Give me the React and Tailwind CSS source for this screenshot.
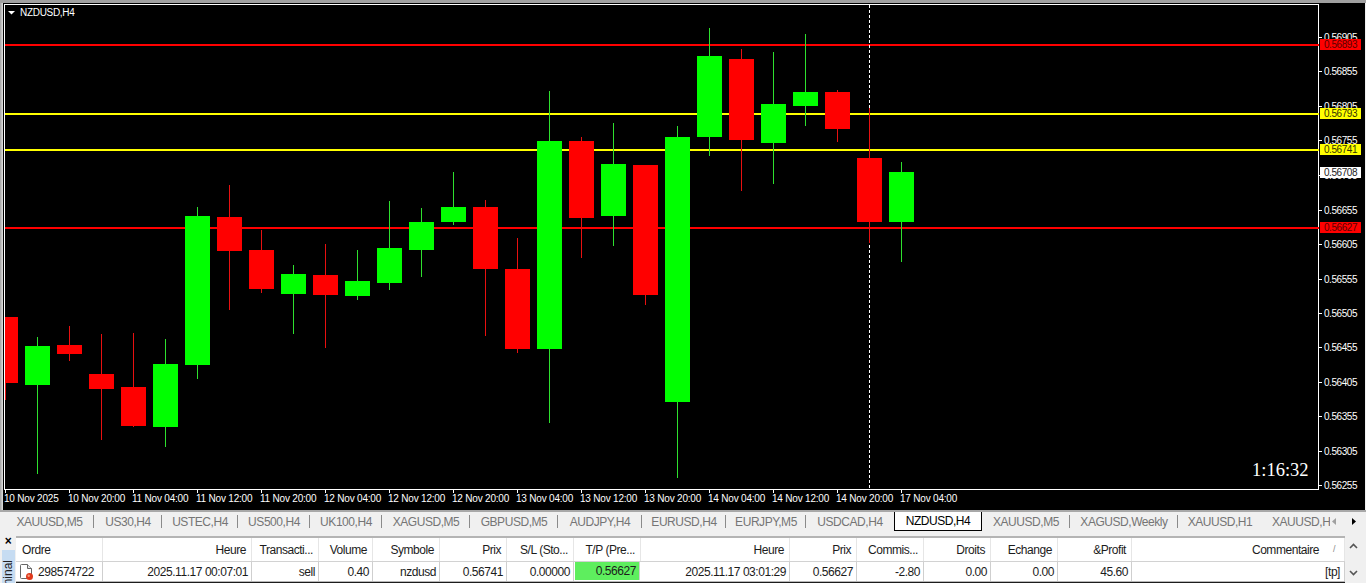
import React from 'react';

// x, body top, body bottom, wick top, wick bottom, up
const candles = [
  [5, 317, 383, 317, 400, false],
  [37, 346, 385, 337, 474, true],
  [69, 345, 354, 326, 361, false],
  [101, 374, 389, 334, 440, false],
  [133, 387, 426, 333, 427, false],
  [165, 364, 427, 339, 447, true],
  [197, 216, 365, 207, 379, true],
  [229, 217, 251, 185, 310, false],
  [261, 250, 289, 230, 293, false],
  [293, 274, 294, 265, 334, true],
  [325, 275, 295, 244, 348, false],
  [357, 281, 296, 250, 300, true],
  [389, 248, 283, 201, 290, true],
  [421, 222, 250, 208, 277, true],
  [453, 207, 222, 172, 225, true],
  [485, 207, 269, 200, 336, false],
  [517, 269, 349, 238, 353, false],
  [549, 141, 349, 91, 423, true],
  [581, 141, 218, 137, 258, false],
  [613, 164, 216, 123, 246, true],
  [645, 165, 295, 165, 305, false],
  [677, 137, 402, 126, 478, true],
  [709, 56, 137, 28, 156, true],
  [741, 59, 140, 49, 191, false],
  [773, 104, 143, 52, 184, true],
  [805, 92, 106, 34, 126, true],
  [837, 92, 129, 90, 142, false],
  [869, 158, 222, 108, 243, false],
  [901, 172, 222, 162, 262, true],
];

const prices = [
  ['0.56905', 37], ['0.56855', 71], ['0.56805', 106], ['0.56755', 140],
  ['0.56705', 175], ['0.56655', 210], ['0.56605', 244], ['0.56555', 279],
  ['0.56505', 313], ['0.56455', 347], ['0.56405', 382], ['0.56355', 416],
  ['0.56305', 451], ['0.56255', 485],
];

const times = [
  '10 Nov 2025', '10 Nov 20:00', '11 Nov 04:00', '11 Nov 12:00', '11 Nov 20:00',
  '12 Nov 04:00', '12 Nov 12:00', '12 Nov 20:00', '13 Nov 04:00', '13 Nov 12:00',
  '13 Nov 20:00', '14 Nov 04:00', '14 Nov 12:00', '14 Nov 20:00', '17 Nov 04:00',
];

const levels = [
  { y: 45, color: '#ff0000', label: '0.56893' },
  { y: 114, color: '#ffff00', label: '0.56793' },
  { y: 150, color: '#ffff00', label: '0.56741' },
  { y: 228, color: '#ff0000', label: '0.56627' },
];

const tabs = [
  { name: 'XAUUSD,M5', width: 'w-[89px]' },
  { name: 'US30,H4', width: 'w-[68px]' },
  { name: 'USTEC,H4', width: 'w-[76px]' },
  { name: 'US500,H4', width: 'w-[72px]' },
  { name: 'UK100,H4', width: 'w-[72px]' },
  { name: 'XAGUSD,M5', width: 'w-[88px]' },
  { name: 'GBPUSD,M5', width: 'w-[88px]' },
  { name: 'AUDJPY,H4', width: 'w-[84px]' },
  { name: 'EURUSD,H4', width: 'w-[84px]' },
  { name: 'EURJPY,M5', width: 'w-[80px]' },
  { name: 'USDCAD,H4', width: 'w-[88px]' },
  { name: 'NZDUSD,H4', width: 'w-[88px]', active: true },
  { name: 'XAUUSD,M5', width: 'w-[88px]' },
  { name: 'XAGUSD,Weekly', width: 'w-[108px]' },
  { name: 'XAUUSD,H1', width: 'w-[84px]' },
];

const columns =
  'grid-cols-[87px_149px_67px_54px_67px_67px_67px_67px_149px_67px_67px_67px_67px_74px_213px]';

const headers = [
  'Ordre', 'Heure', 'Transacti...', 'Volume', 'Symbole', 'Prix', 'S/L (Sto...', 'T/P (Pre...',
  'Heure', 'Prix', 'Commis...', 'Droits', 'Echange', '&Profit', 'Commentaire',
];

const values = [
  '298574722', '2025.11.17 00:07:01', 'sell', '0.40', 'nzdusd', '0.56741', '0.00000', '0.56627',
  '2025.11.17 03:01:29', '0.56627', '-2.80', '0.00', '0.00', '45.60', '[tp]',
];

const Chart = () => (
  <svg
    className="block w-[1362px] h-[507px] font-['Liberation_Sans',sans-serif]"
    viewBox="3 3 1362 507"
    shapeRendering="crispEdges"
  >
    <rect x="3" y="3" width="1362" height="507" fill="#000" />
    <path d="M4.5 4.5H1318.5V489.5H4.5Z" fill="none" stroke="#fff" />

    {levels.map((l) => (
      <rect key={l.y} x="5" y={l.y - 1} width="1314" height="2" fill={l.color} />
    ))}

    <line x1="869.5" y1="5" x2="869.5" y2="489" stroke="#fff" strokeDasharray="3 2" />

    {candles.map(([x, top, bottom, wickTop, wickBottom, up]) => (
      <g key={x}>
        <rect x={x} y={wickTop} width="1" height={wickBottom - wickTop} fill={up ? '#2ee02e' : '#e81010'} />
        <rect
          x={Math.max(x - 12, 5)}
          y={top}
          width={x - 12 < 5 ? x + 13 - 5 : 25}
          height={bottom - top}
          fill={up ? '#00ff00' : '#ff0000'}
        />
      </g>
    ))}

    <path d="M8 11H15L11.5 14.5Z" fill="#fff" shapeRendering="auto" />
    <text x="20" y="16" fill="#fff" className="text-[10px] tracking-[-0.3px]">NZDUSD,H4</text>

    {prices.map(([label, y]) => (
      <g key={label}>
        <rect x="1319" y={y} width="3" height="1" fill="#fff" />
        <text x="1324" y={y + 4} fill="#fff" className="text-[10px] tracking-[-0.45px]">{label}</text>
      </g>
    ))}

    {levels.map((l) => (
      <g key={l.label}>
        <rect x="1320" y={l.y - 6} width="41" height="11" fill={l.color} />
        <text x="1324" y={l.y + 3} fill={l.color === '#ff0000' ? '#5a0000' : '#333300'} className="text-[10px] tracking-[-0.45px]">
          {l.label}
        </text>
      </g>
    ))}
    <rect x="1320" y="167" width="41" height="11" fill="#fff" />
    <text x="1324" y="176" fill="#222" className="text-[10px] tracking-[-0.45px]">0.56708</text>

    {times.map((label, i) => (
      <g key={label}>
        <rect x={5 + i * 64} y="490" width="1" height="3" fill="#fff" />
        <text x={4 + i * 64} y="502" fill="#fff" className="text-[10px] tracking-[-0.2px]">{label}</text>
      </g>
    ))}

    <text x="1252" y="476" fill="#fff" className="font-['Liberation_Serif',serif] text-[18.5px]">1:16:32</text>
  </svg>
);

const TabBar = () => (
  <div className="flex h-[23px] items-start border-t-2 border-[#a8a8a8] bg-[#f0f0f0] pl-[5px] text-[12px] tracking-[-0.45px]">
    {tabs.map((tab, i) => (
      <div
        key={i}
        className={
          tab.active
            ? `${tab.width} flex h-[19px] shrink-0 items-center justify-center border-x border-b border-black bg-white text-black`
            : `${tab.width} flex h-[19px] shrink-0 items-center justify-center text-[#757575] ${
                tabs[i + 1] && !tabs[i + 1].active ? 'relative after:absolute after:right-0 after:top-[3px] after:h-[13px] after:w-px after:bg-[#8a8a8a]' : ''
              }`
        }
      >
        {tab.name}
      </div>
    ))}
    <div className="flex h-[19px] w-[68px] shrink-0 items-center overflow-hidden whitespace-nowrap pl-[10px] text-[#757575]">XAUUSD,H</div>
    <div className="flex h-[19px] items-center gap-[16px] pl-[2px]">
      <svg width="4" height="7" viewBox="0 0 4 7"><path d="M4 0V7L0 3.5Z" fill="#a0a0a0" /></svg>
      <svg width="4" height="7" viewBox="0 0 4 7"><path d="M0 0V7L4 3.5Z" fill="#000" /></svg>
    </div>
  </div>
);

const OrderIcon = () => (
  <svg width="16" height="18" viewBox="0 0 16 18" className="shrink-0">
    <path d="M1.5 2.5Q1.5 1.5 2.5 1.5H8.5L12.5 5.5V15.5H2.5Q1.5 15.5 1.5 14.5Z" fill="#fff" stroke="#666" />
    <path d="M8.5 1.5V5.5H12.5" fill="#e8e8e8" stroke="#666" />
    <circle cx="10.5" cy="13.5" r="3.5" fill="#e0391c" />
    <circle cx="9.7" cy="12.7" r="1.2" fill="#f59a7c" />
  </svg>
);

const Terminal = () => (
  <div className="flex h-[50px] bg-[#f0f0f0] font-['Liberation_Sans',sans-serif] text-[12px] tracking-[-0.45px] text-[#1c1c1c]">
    <div className="flex w-[16px] shrink-0 flex-col items-center">
      <div className="mt-[1px] h-[14px] text-[12px] font-bold leading-[14px] text-black">×</div>
      <div className="mt-[2px] flex h-[33px] w-[13px] justify-center overflow-hidden bg-[#c6dcf2]">
        <span className="h-max rotate-180 whitespace-nowrap pb-[10px] text-[12px] leading-[13px] tracking-normal text-[#222] [writing-mode:vertical-rl]">
          Terminal
        </span>
      </div>
    </div>

    <div className="mt-[3px] w-[1329px] shrink-0">
      <div className={`grid h-[26px] ${columns} border-t-2 border-b border-t-[#b4b4b4] border-b-[#d2d2d2] bg-white`}>
        {headers.map((h, i) => (
          <div
            key={i}
            className={`flex items-center border-r border-[#e6e6e6] ${
              i === 0 ? 'pl-[6px]' : i === 14 ? 'justify-end pr-[25px]' : 'justify-end pr-[5px]'
            } ${i === 14 ? 'relative' : ''}`}
          >
            {h}
            {i === 14 && <span className="absolute right-[9px] text-[9px] text-[#888]">/</span>}
          </div>
        ))}
      </div>
      <div className={`grid h-[20px] ${columns} border-b border-[#b8b8b8] bg-white`}>
        {values.map((v, i) =>
          i === 0 ? (
            <div key={i} className="flex items-center gap-[3px] border-r border-[#cfcfcf] pl-[3px]">
              <OrderIcon />
              {v}
            </div>
          ) : (
            <div
              key={i}
              className={`flex items-center justify-end border-r border-[#cfcfcf] pr-[3px] ${
                i === 7 ? 'mx-[1px] mb-[1px] bg-[#5eee5e]' : ''
              } ${i === 14 ? 'pr-[4px]' : ''}`}
            >
              {v}
            </div>
          )
        )}
      </div>
      <div className="h-px bg-[#1c1c1c]" />
    </div>

    <div className="flex flex-1 flex-col items-center gap-[21px] pr-[5px] pt-[10px]">
      <svg width="9" height="6" viewBox="0 0 9 6"><path d="M1 5L4.5 1.5L8 5" fill="none" stroke="#555" strokeWidth="1.6" /></svg>
      <svg width="9" height="6" viewBox="0 0 9 6"><path d="M1 1L4.5 4.5L8 1" fill="none" stroke="#555" strokeWidth="1.6" /></svg>
    </div>
  </div>
);

export default function App() {
  return (
    <div className="flex h-[583px] w-[1366px] flex-col overflow-hidden bg-[#f0f0f0] font-['Liberation_Sans',sans-serif]">
      <div className="h-[3px] bg-[#a0a0a0]" />
      <div className="flex h-[507px]">
        <div className="w-[3px] bg-gradient-to-r from-[#a0a0a0] to-[#e0e0e0]" />
        <Chart />
        <div className="flex-1 bg-[#f0f0f0]" />
      </div>
      <TabBar />
      <Terminal />
    </div>
  );
}
